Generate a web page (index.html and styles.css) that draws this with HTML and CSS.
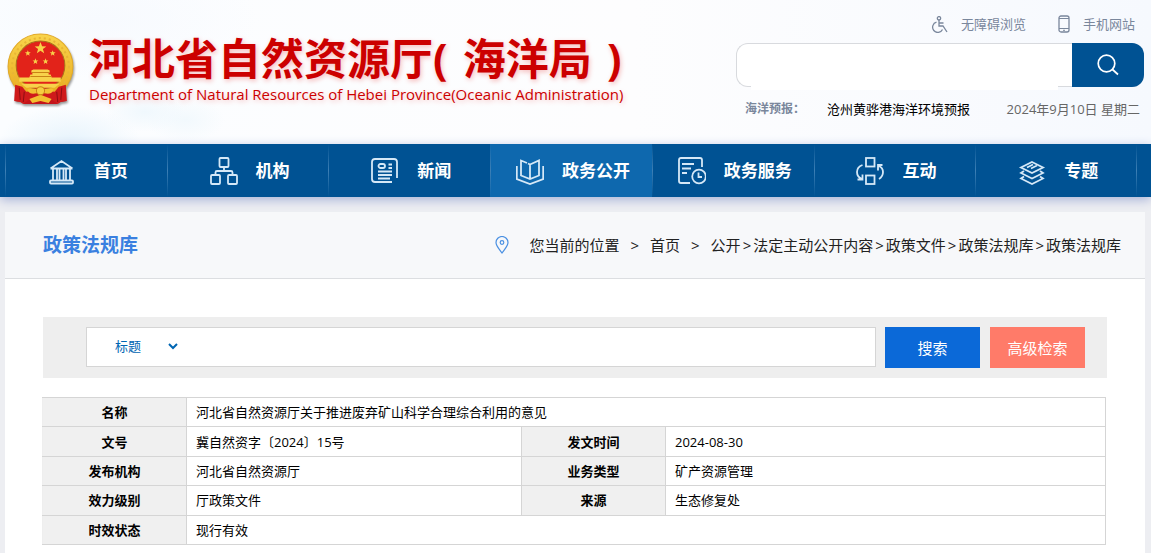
FILE: index.html
```html
<!DOCTYPE html>
<html lang="zh-CN">
<head>
    <meta charset="UTF-8">
    <meta name="viewport" content="width=device-width, initial-scale=1.0">
    <title>政策法规库</title>
    <link rel="stylesheet" href="styles.css">
</head>
<body>
    <header class="header">
        <div class="logo">
            <svg class="emblem" viewBox="0 0 66 72" aria-hidden="true">
                <defs>
                    <linearGradient id="gold" x1="0" y1="0" x2="0" y2="1">
                        <stop offset="0" stop-color="#f9d44c"/>
                        <stop offset="1" stop-color="#e8a91c"/>
                    </linearGradient>
                    <path id="star" d="M0-5L1.3-1.6 4.8-1.5 2 .7 3 4.1 0 2.1-3 4.1-2 .7-4.8-1.5-1.3-1.6z"/>
                </defs>
                <path d="M10 50L8 67l6 1 3 2 32 0 3-2 6-1-2-17z" fill="#c3131a"/>
                <circle cx="33" cy="33" r="32" fill="url(#gold)" stroke="#e2aa28"/>
                <circle cx="33" cy="33" r="28" fill="none" stroke="#e8b535" stroke-width="2" stroke-dasharray="2 3"/>
                <circle cx="33" cy="32" r="24" fill="#e2231a" stroke="#a8701c"/>
                <g fill="#f8d24a">
                    <use href="#star" transform="translate(33 15) scale(1.2)"/>
                    <use href="#star" transform="translate(20.500 20) scale(.6)"/>
                    <use href="#star" transform="translate(45 20) scale(.6)"/>
                    <use href="#star" transform="translate(28 28) scale(.6)"/>
                    <use href="#star" transform="translate(38 28) scale(.6)"/>
                    <path d="M24 37l2-1h14l2 1v2h-1v2h2l1 3h9v4H12v-4h10l1-3h2v-2h-1z"/>
                    <path d="M14 50h38l-5 4H19z"/>
                </g>
                <path d="M24 39h18M23 43h21" stroke="#c98315" stroke-width="1" fill="none"/>
                <path d="M8 51l7 2 4 5 9-1 5 2 5-2 9 1 4-5 7-2 1 16-6 1-3 2-7-5-10 2-10-2-7 5-3-2-6-1z" fill="#cf1a1b"/>
                <path d="M12 54l1 12M17 58l-1 10M54 54l-1 12M49 58l1 10" stroke="#8f0d13" fill="none"/>
                <path d="M20 56c5-3 8 1 13-2 5 3 8-1 13 2-3 6-8 4-13 2-5 2-10 4-13-2zM22 65l11-4 11 4-3 4-8-2-8 2z" fill="#f3bf31"/>
                <circle cx="33" cy="57" r="4" fill="#f6cd42" stroke="#c98315"/>
            </svg>
            <div class="logo-text">
                <h1>河北省自然资源厅( <span class="bureau">海洋局</span> )</h1>
                <p>Department of Natural Resources of Hebei Province(Oceanic Administration)</p>
            </div>
        </div>

        <div class="header-right">
            <div class="top-links">
                <a href="#">
                    <svg width="17" height="17" viewBox="0 0 17 17" fill="none" stroke="currentColor" stroke-width="1.300">
                        <circle cx="8" cy="2.300" r="1.700"/>
                        <path d="M8 4v6h4l4 6M8 7h4.500M5.500 6.200a5.200 5.200 0 1 0 6 7.300"/>
                    </svg>
                    无障碍浏览
                </a>
                <a href="#">
                    <svg width="12" height="18" viewBox="0 0 12 18" fill="none" stroke="currentColor">
                        <rect x="1" y="1" width="10" height="16" rx="2" stroke-width="1.300"/>
                        <path d="M1 3.500h10M1 13.500h10M5 15.300h2"/>
                    </svg>
                    手机网站
                </a>
            </div>
            <form class="site-search">
                <input type="text" aria-label="站内搜索">
                <button type="submit" aria-label="搜索">
                    <svg width="22" height="22" viewBox="0 0 22 22" fill="none" stroke="#fff" stroke-width="1.700">
                        <circle cx="9.500" cy="9.500" r="8.300"/>
                        <path d="M15.500 15.500l5.500 5"/>
                    </svg>
                </button>
            </form>
            <div class="forecast">
                <strong>海洋预报：</strong>
                <a href="#">沧州黄骅港海洋环境预报</a>
                <span class="date">2024年9月10日 星期二</span>
            </div>
        </div>
    </header>

    <nav class="nav">
        <ul>
            <li><a href="#">
                <svg viewBox="0 0 28 28">
                    <path d="M2.500 11.500L13.500 4l11 7.500M2.500 11.500h22M5 12v11M9 12v11M11.500 12v11M15.500 12v11M18 12v11M22 12v11"/>
                    <rect x="2" y="23.500" width="23" height="3" rx="1"/>
                </svg>
                首页</a></li>
            <li><a href="#">
                <svg viewBox="0 0 28 28">
                    <rect x="9.500" y="1" width="9" height="9" rx="1"/>
                    <rect x="1" y="18" width="9" height="9" rx="1"/>
                    <rect x="18" y="18" width="9" height="9" rx="1"/>
                    <path d="M14 10v4M5.500 18v-2.500q0-1.500 1.500-1.500h14q1.500 0 1.500 1.500V18"/>
                </svg>
                机构</a></li>
            <li><a href="#">
                <svg viewBox="0 0 28 28">
                    <path d="M26 21V5q0-3-3-3H4Q1 2 1 5v17q0 3 3 3h17M17.500 7.500H21M17.500 11H21M7 14.500H21M7 18H21M7 21.500H19"/>
                    <rect x="7.500" y="7" width="6.500" height="4" rx="2"/>
                </svg>
                新闻</a></li>
            <li class="active"><a href="#">
                <svg viewBox="0 0 28 28">
                    <path d="M14 21.500V7.500l9-4v15l-9 3.500-9-3.500V3.500l6 2.500M14 7.500l-2-1M.8 9v13L14 27 27.200 22V9"/>
                </svg>
                政务公开</a></li>
            <li><a href="#">
                <svg viewBox="0 0 28 28">
                    <path d="M24 10V3q0-2-2-2H3Q1 1 1 3v21q0 2 2 2h9M4 7h12M4 11.500h9M4 16h5"/>
                    <circle cx="21" cy="19.500" r="6.800"/>
                    <path d="M20.500 15.500v4.500h3.500"/>
                </svg>
                政务服务</a></li>
            <li><a href="#">
                <svg viewBox="0 0 28 28">
                    <rect x="10" y="1" width="8.500" height="8.500"/>
                    <rect x="10" y="18.500" width="8.500" height="8.500"/>
                    <path d="M6.500 8Q1 10 1 15t5 7M1.500 22.500h5V17.500M23 22q4-2.500 4-7t-4.500-6M22 13.500V8h4.500"/>
                </svg>
                互动</a></li>
            <li><a href="#">
                <svg viewBox="0 0 28 28">
                    <path d="M14 5l11 5.500L14 16 3 10.500zM6 14l-3 2 11 5.500L25 16l-3-2M6 19.500l-3 2 11 5.500 11-5.500-3-2M9 10.500l6-3M13 11.500l6-3"/>
                </svg>
                专题</a></li>
        </ul>
    </nav>

    <main class="panel">
        <div class="panel-head">
            <h2>政策法规库</h2>
            <div class="crumbs">
                <svg width="14" height="18" viewBox="0 0 14 18" fill="none" stroke="#4a90e2" stroke-width="1.200">
                    <path d="M7 17C4 12.500 1 10 1 6.500a6 6 0 0 1 12 0C13 10 10 12.500 7 17z"/>
                    <circle cx="7" cy="6.500" r="1.800"/>
                </svg>
                <span>您当前的位置</span>
                <span>&gt;</span>
                <a href="#">首页</a>
                <span>&gt;</span>
                <div class="path"><a href="#">公开</a>&gt;<a href="#">法定主动公开内容</a>&gt;<a href="#">政策文件</a>&gt;<a href="#">政策法规库</a>&gt;<a href="#">政策法规库</a></div>
            </div>
        </div>

        <div class="content">
            <form class="search-bar">
                <div class="search-box">
                    <select aria-label="检索字段">
                        <option>标题</option>
                    </select>
                    <input type="text" aria-label="检索内容">
                </div>
                <button type="submit" class="btn-search">搜索</button>
                <button type="button" class="btn-advanced">高级检索</button>
            </form>

            <table class="info">
                <colgroup>
                    <col class="col-label">
                    <col class="col-left">
                    <col class="col-label">
                    <col>
                </colgroup>
                <tr>
                    <th>名称</th>
                    <td colspan="3">河北省自然资源厅关于推进废弃矿山科学合理综合利用的意见</td>
                </tr>
                <tr>
                    <th>文号</th>
                    <td>冀自然资字〔2024〕15号</td>
                    <th>发文时间</th>
                    <td>2024-08-30</td>
                </tr>
                <tr>
                    <th>发布机构</th>
                    <td>河北省自然资源厅</td>
                    <th>业务类型</th>
                    <td>矿产资源管理</td>
                </tr>
                <tr>
                    <th>效力级别</th>
                    <td>厅政策文件</td>
                    <th>来源</th>
                    <td>生态修复处</td>
                </tr>
                <tr>
                    <th>时效状态</th>
                    <td colspan="3">现行有效</td>
                </tr>
            </table>
        </div>
    </main>
</body>
</html>
```

FILE: styles.css
```css
* {
    box-sizing: border-box;
}
body {
    display: flex;
    flex-direction: column;
    min-height: 100vh;
    margin: 0;
    background: #edeef2;
    font-family: "Open Sans", "Noto Sans CJK SC", sans-serif;
    font-size: 13px;
    line-height: 20px;
    color: #000;
}
a {
    color: inherit;
    text-decoration: none;
}
h1, h2, p, ul {
    margin: 0;
    padding: 0;
}
input, select, button {
    font-family: inherit;
    border: 0;
    outline: 0;
}
button {
    cursor: pointer;
}

/* header */
.header {
    display: flex;
    justify-content: space-between;
    height: 144px;
    padding: 0 7px;
    background:
        radial-gradient(ellipse 70px 34px at 70px 140px, #e8f4fc, transparent),
        radial-gradient(ellipse 40px 20px at 145px 112px, #f0f8fd, transparent),
        radial-gradient(ellipse 40px 22px at 185px 120px, #f2f9fd, transparent),
        radial-gradient(ellipse 160px 60px at 100px 20px, #f7fafe, transparent),
        linear-gradient(90deg, #fbfdff, #fdfdfe 55%, #f6f9fe);
}
.logo {
    display: flex;
    gap: 15px;
    padding-top: 33px;
}
.emblem {
    width: 67px;
    height: 73px;
    filter: drop-shadow(1px 2px 1px #999);
}
.logo-text {
    color: #c00;
    text-shadow: 1px 2px 5px #f5bcbc;
    white-space: nowrap;
}
.logo-text h1 {
    font-size: 43px;
    line-height: 52px;
}
.logo-text p {
    font-size: 15px;
    line-height: 18px;
}
.bureau {
    padding: 0 4px;
}
.header-right {
    width: 408px;
    padding-top: 14px;
}
.top-links {
    display: flex;
    justify-content: flex-end;
    gap: 32px;
    padding-right: 9px;
    color: #7a879c;
}
.top-links a {
    display: flex;
    align-items: center;
    gap: 13px;
}
.site-search {
    display: flex;
    height: 44px;
    margin-top: 9px;
    border: 1px solid #d8dade;
    border-right: 0;
    border-radius: 12px;
    background: #fff;
}
.site-search input {
    flex: 1;
    height: 46px;
    margin: 0 14px;
    background: #fff;
}
.site-search button {
    display: flex;
    align-items: center;
    justify-content: center;
    width: 72px;
    height: 44px;
    margin-top: -1px;
    border-radius: 0 12px 12px 0;
    background: #005293;
}
.forecast {
    display: flex;
    gap: 22px;
    margin-top: 12px;
    padding: 0 4px 0 9px;
}
.forecast strong {
    font-size: 12px;
    color: #7a879c;
}
.forecast .date {
    margin-left: auto;
    color: #666;
}

/* main menu */
.nav {
    position: relative;
    padding: 0 14px 0 5px;
    background: #005293;
    box-shadow: 0 3px 10px #a9b4d8;
}
.nav ul {
    display: flex;
    list-style: none;
}
.nav li {
    flex: 1;
    background: linear-gradient(transparent, #3c7fb5 50%, transparent) left / 1px 100% no-repeat;
}
.nav li:last-child {
    background:
        linear-gradient(transparent, #3c7fb5 50%, transparent) left / 1px 100% no-repeat,
        linear-gradient(transparent, #3c7fb5 50%, transparent) right / 1px 100% no-repeat;
}
.nav li.active {
    background-color: #0e68ae;
}
.nav a {
    display: flex;
    align-items: center;
    justify-content: center;
    gap: 18px;
    height: 53px;
    padding-left: 4px;
    font-size: 17px;
    font-weight: bold;
    color: #fff;
}
.nav svg {
    width: 28px;
    height: 28px;
    fill: none;
    stroke: #d5e8f7;
    stroke-width: 1.8;
}

/* content panel */
.panel {
    flex: 1;
    margin: 15px 6px 0 5px;
    background: #fff;
}
.panel-head {
    display: flex;
    align-items: center;
    justify-content: space-between;
    height: 67px;
    padding: 0 24px 0 38px;
    border-bottom: 1px solid #dcdee1;
    background: #f7f8fa;
}
.panel-head h2 {
    font-size: 19px;
    color: #3a80e0;
}
.crumbs {
    display: flex;
    align-items: center;
    gap: 11px;
    font-size: 15px;
    color: #222;
}
.crumbs svg {
    margin-right: 9px;
}
.path {
    display: flex;
    gap: 2px;
}
.content {
    padding: 38px 38px 7px;
}
.search-bar {
    display: flex;
    padding: 10px 22px 10px 43px;
    background: #eee;
}
.search-box {
    display: flex;
    flex: 1;
    height: 40px;
    margin-right: 9px;
    border: 1px solid #d5d5d5;
    background: #fff;
}
.search-box select {
    width: 70px;
    height: 36px;
    margin-left: 24px;
    background: #fff;
    font-size: 13px;
    color: #0066b3;
}
.search-box input {
    flex: 1;
}
.search-bar button {
    width: 95px;
    height: 41px;
    padding: 0;
    font-size: 15px;
    color: #fff;
}
.btn-search {
    background: #0b69d8;
}
.btn-advanced {
    margin-left: 10px;
    background: #ff7b69;
}
.info {
    width: 100%;
    height: 148px;
    margin: 19px 0 0 -1px;
    border-collapse: collapse;
    table-layout: fixed;
}
.info th,
.info td {
    padding: 0 9px;
    border: 1px solid #d5d5d5;
    text-align: left;
}
.info th {
    background: #f0f0f0;
    text-align: center;
}
.info th:first-child {
    border-left-color: #eee;
}
.col-label {
    width: 144px;
}
.col-left {
    width: 335px;
}
```
